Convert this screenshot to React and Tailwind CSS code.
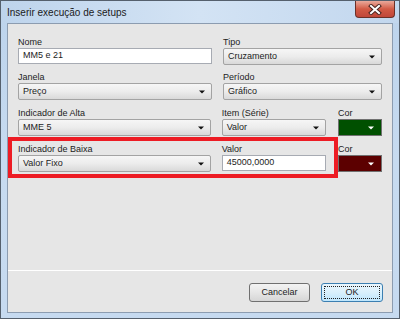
const Tri = ({ white }) => (
  <svg width="6" height="4" viewBox="0 0 6 4" className="shrink-0">
    <path d="M0 0.5H6L3 3.5Z" fill={white ? '#ffffff' : '#111111'} />
  </svg>
);

const Label = ({ children }) => (
  <div className="h-[12px] leading-[12px] text-[9px] text-[#1c1c1c] whitespace-nowrap">{children}</div>
);

const Select = ({ value, className = '' }) => (
  <div className={`h-[17px] flex items-center justify-between pl-[4px] pr-[6px] rounded-[2px] border border-[#a3a3a3] bg-linear-to-b from-[#f6f6f6] via-[#ececec] to-[#d9d9d9] text-[9px] text-[#1c1c1c] ${className}`}>
    <span>{value}</span>
    <Tri />
  </div>
);

const Input = ({ value, className = '' }) => (
  <div className={`h-[16px] flex items-center pl-[4px] bg-white border border-[#a7abb3] text-[9px] text-[#1c1c1c] ${className}`}>
    {value}
  </div>
);

const ColorBox = ({ color }) => (
  <div className={`w-[44px] h-[17px] flex items-center justify-end pr-[7px] border border-[#707070] ${color}`}>
    <Tri white />
  </div>
);

export default function App() {
  return (
    <div className="relative w-[400px] h-[319px] flex flex-col border border-[#55606d] bg-linear-to-b from-[#bcd3ec] via-[#c7dbf0] to-[#c6daf0] font-['Liberation_Sans',Arial,sans-serif]">
      {/* title bar */}
      <div className="h-[22px] shrink-0 flex items-start bg-linear-to-r from-[#bed4ec] via-[#d3e3f4] to-[#c2d7ee]">
        <span className="pl-[6px] pt-[7px] text-[10px] leading-none text-[#1b1b1b]">Inserir execução de setups</span>
      </div>
      <div className="absolute top-0 right-[4px] w-[40px] h-[17px] rounded-b-[4px] border border-t-0 border-[#6b3028] bg-linear-to-b from-[#e9a99b] via-[#d25a45] to-[#c0473a] flex items-center justify-center">
        <svg width="14" height="11" viewBox="0 0 14 11">
          <path d="M3 2L11 9M11 2L3 9" stroke="#4a2420" strokeWidth="4" strokeLinecap="square" />
          <path d="M3 2L11 9M11 2L3 9" stroke="#ffffff" strokeWidth="2" strokeLinecap="square" />
        </svg>
      </div>

      {/* client area */}
      <div className="relative flex-1 mx-[6px] mb-[5px] flex flex-col border border-[#8c9cb0] bg-[#e6e6e6]">
        <div className="flex-1 pt-[12px] pl-[10px] pr-[10px] flex flex-col">
          <div className="h-[35px] flex gap-[11px]">
            <div className="w-[194px]">
              <Label>Nome</Label>
              <Input value="MM5 e 21" />
            </div>
            <div className="flex-1">
              <Label>Tipo</Label>
              <Select value="Cruzamento" />
            </div>
          </div>
          <div className="h-[36px] flex gap-[11px]">
            <div className="w-[194px]">
              <Label>Janela</Label>
              <Select value="Preço" />
            </div>
            <div className="flex-1">
              <Label>Período</Label>
              <Select value="Gráfico" />
            </div>
          </div>
          <div className="h-[36px] flex gap-[11px]">
            <div className="w-[194px]">
              <Label>Indicador de Alta</Label>
              <Select value="MME 5" />
            </div>
            <div className="w-[105px]">
              <Label>Item (Série)</Label>
              <Select value="Valor" />
            </div>
            <div className="w-[44px] ml-[1px]">
              <Label>Cor</Label>
              <ColorBox color="bg-[#005000]" />
            </div>
          </div>
          <div className="h-[36px] flex gap-[11px]">
            <div className="w-[194px]">
              <Label>Indicador de Baixa</Label>
              <Select value="Valor Fixo" />
            </div>
            <div className="w-[105px]">
              <Label>Valor</Label>
              <Input value="45000,0000" />
            </div>
            <div className="w-[44px] ml-[1px]">
              <Label>Cor</Label>
              <ColorBox color="bg-[#5c0000]" />
            </div>
          </div>
        </div>

        {/* annotation */}
        <div className="absolute left-0 top-[113px] w-[330px] h-[41px] border-[4px] border-[#ed1c24]" />

        {/* footer */}
        <div className="h-[42px] shrink-0 border-t border-white flex justify-end items-start gap-[11px] pt-[12px] pr-[9px]">
          <button className="w-[61px] h-[19px] rounded-[3px] border border-[#707070] bg-linear-to-b from-[#f3f3f3] via-[#e6e6e6] to-[#d6d6d6] text-[9px] text-[#1c1c1c]">
            Cancelar
          </button>
          <button className="w-[62px] h-[19px] rounded-[3px] border border-[#3c7fb1] bg-linear-to-b from-[#eaf6fd] via-[#d9f0fc] to-[#bee6fd] p-[2px]">
            <div className="w-full h-full border border-dotted border-[#222] flex items-center justify-center text-[9px] text-[#1c1c1c]">
              OK
            </div>
          </button>
        </div>
      </div>
    </div>
  );
}
